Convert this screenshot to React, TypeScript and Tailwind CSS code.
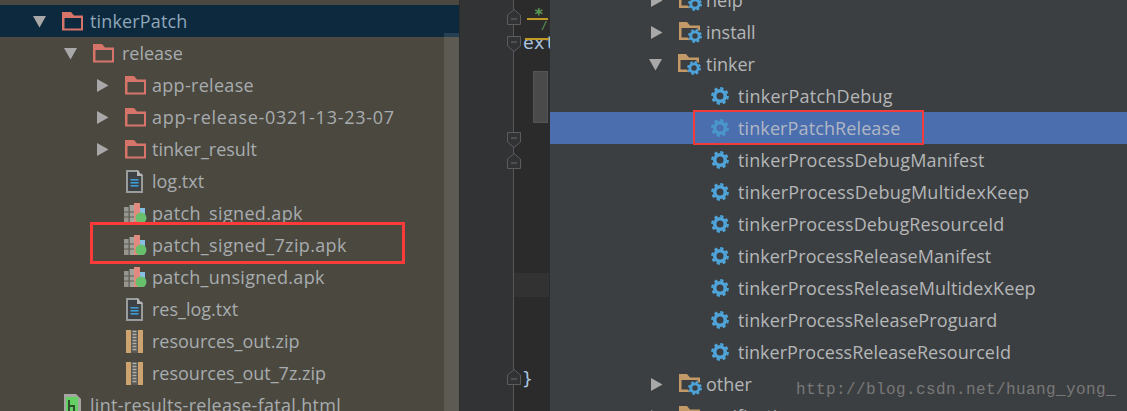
import React from "react";

const font = { fontFamily: '"Open Sans", "Noto Sans", sans-serif' };

function Tri({ open }: { open?: boolean }) {
  return (
    <svg width="13" height="13" viewBox="0 0 13 13" className="shrink-0">
      {open ? <polygon points="0,1 13,1 6.5,12.5" fill="#a8a8a8" /> : <polygon points="1,0 12.5,6.5 1,13" fill="#a8a8a8" />}
    </svg>
  );
}

function RedFolder() {
  return (
    <svg width="22" height="19" viewBox="0 0 22 19" className="shrink-0">
      <path d="M0 0H9L12 3.5H21V18.5H0Z" fill="#d7746a" />
      <rect x="2.5" y="6" width="16.5" height="10.5" fill="#4b4840" />
    </svg>
  );
}

function SelFolder() {
  return (
    <svg width="22" height="19" viewBox="0 0 22 19" className="shrink-0">
      <path d="M0 0H9L12 3.5H21V18.5H0Z" fill="#d7746a" />
      <rect x="2.5" y="6" width="16.5" height="10.5" fill="#0d293e" />
    </svg>
  );
}

function Gear({ size = 18, dim }: { size?: number; dim?: boolean }) {
  const c = dim ? "#4a95cc" : "#4ea3d8";
  return (
    <svg width={size} height={size} viewBox="0 0 18 18" className="shrink-0">
      <circle cx="9" cy="9" r="5.3" fill="none" stroke={c} strokeWidth="3.6" />
      <circle cx="9" cy="9" r="7.6" fill="none" stroke={c} strokeWidth="2.6" strokeDasharray="3.2 2.77" />
    </svg>
  );
}

function GearFolder() {
  return (
    <span className="relative block w-[23px] h-[21px] shrink-0">
      <svg width="21" height="18" viewBox="0 0 21 18" className="block">
        <path d="M0 0H8L11 3.5H21V18H0Z" fill="#c39a67" />
        <rect x="2.5" y="6" width="16" height="9.5" fill="#3c3f41" />
      </svg>
      <span className="absolute left-[9px] top-[7px] w-[14px] h-[14px] rounded-full bg-[#3c3f41] flex items-center justify-center">
        <Gear size={14} />
      </span>
    </span>
  );
}

function TxtIcon() {
  return (
    <svg width="17" height="23" viewBox="0 0 17 23" className="shrink-0">
      <path d="M0 0H12L17 5V23H0Z" fill="#9a9c9c" />
      <rect x="2" y="2" width="13" height="19" fill="#3d4144" />
      <path d="M11 0L17 6H11Z" fill="#b5b5b5" />
      <rect x="4.5" y="9" width="8" height="1.6" fill="#3f9dd6" />
      <rect x="4.5" y="12" width="8" height="1.6" fill="#3f9dd6" />
      <rect x="4.5" y="15" width="8" height="1.6" fill="#3f9dd6" />
    </svg>
  );
}

function ApkIcon() {
  return (
    <svg width="23" height="20" viewBox="0 0 23 20" className="shrink-0">
      <rect x="0" y="4" width="5" height="16" fill="#96968f" />
      <rect x="5.5" y="2" width="4.5" height="18" fill="#a3a39c" />
      <path d="M0 9H10M0 14H10M5 4V20" stroke="#5f5e58" strokeWidth="1" />
      <rect x="10" y="0" width="6" height="20" fill="#e08a80" />
      <rect x="16" y="5" width="5" height="8" fill="#86bfe2" />
      <circle cx="17" cy="15" r="5.5" fill="#68c06c" />
    </svg>
  );
}

function ZipIcon() {
  return (
    <svg width="17" height="23" viewBox="0 0 17 23" className="shrink-0">
      <rect x="0" y="0" width="17" height="23" fill="#cda46f" />
      <rect x="5" y="0" width="7" height="23" fill="#5a5852" />
      <path d="M6.5 1.5H10.5M6.5 4.5H10.5M6.5 7.5H10.5M6.5 10.5H10.5M6.5 13.5H10.5M6.5 16.5H10.5M6.5 19.5H10.5" stroke="#b0b0ac" strokeWidth="1.4" />
    </svg>
  );
}

function HtmlIcon() {
  return (
    <svg width="17" height="23" viewBox="0 0 17 23" className="shrink-0">
      <path d="M0 0H12L17 5V23H0Z" fill="#a5a5a2" />
      <rect x="2" y="3" width="12" height="20" fill="#63d063" />
      <path d="M5 6V19M5 12H10V19" stroke="#2f4f2f" strokeWidth="2" fill="none" />
    </svg>
  );
}

function LRow({ indent, tri, icon, text, gap, selected, track = "" }: { indent: number; tri?: "open" | "closed"; icon: React.ReactNode; text: string; gap: number; selected?: boolean; track?: string }) {
  return (
    <div className={`h-[32px] flex items-center shrink-0 ${selected ? "bg-[#0d293e]" : ""}`} style={{ paddingLeft: indent }}>
      <span className="w-[29px] shrink-0 flex">{tri ? <Tri open={tri === "open"} /> : null}</span>
      <span className="shrink-0 flex items-center" style={{ width: gap }}>{icon}</span>
      <span className={`text-[18px] leading-[32px] whitespace-nowrap ${track} ${selected ? "text-[#8fa6b8]" : "text-[#a7acae]"}`}>{text}</span>
    </div>
  );
}

function RRow({ indent, tri, text, selected, folder, track = "", iconW = 27 }: { indent: number; tri?: "open" | "closed"; text: string; selected?: boolean; folder?: boolean; track?: string; iconW?: number }) {
  return (
    <div className={`h-[32px] flex items-center shrink-0 ${selected ? "bg-[#4b6eaf]" : ""}`} style={{ paddingLeft: indent }}>
      {folder ? (
        <>
          <span className="w-[29px] shrink-0 flex"><Tri open={tri === "open"} /></span>
          <span className="shrink-0 flex" style={{ width: iconW }}><GearFolder /></span>
        </>
      ) : (
        <span className="w-[27px] shrink-0 flex"><Gear dim={selected} /></span>
      )}
      <span className={`text-[18px] leading-[32px] whitespace-nowrap ${track} ${selected ? "text-[#b0b7c4]" : "text-[#b4b6b8]"}`}>{text}</span>
    </div>
  );
}

function Fold({ y, up }: { y: number; up?: boolean }) {
  return (
    <svg width="14" height="16" viewBox="0 0 14 16" className="absolute left-[47px]" style={{ top: y }}>
      {up ? (
        <path d="M.5 15.5H13.5V6L7 .5L.5 6Z" fill="#313335" stroke="#5a5c5e" />
      ) : (
        <path d="M.5 .5H13.5V10L7 15.5L.5 10Z" fill="#313335" stroke="#5a5c5e" />
      )}
      <path d={up ? "M4 10H10" : "M4 6H10"} stroke="#6a6c6e" />
    </svg>
  );
}

const tasks = [
  { t: "tinkerProcessDebugManifest", c: "tracking-[0.19px]" },
  { t: "tinkerProcessDebugMultidexKeep", c: "tracking-[0.23px]" },
  { t: "tinkerProcessDebugResourceId", c: "tracking-[0.14px]" },
  { t: "tinkerProcessReleaseManifest", c: "tracking-[0.07px]" },
  { t: "tinkerProcessReleaseMultidexKeep", c: "tracking-[0.12px]" },
  { t: "tinkerProcessReleaseProguard", c: "tracking-[0.1px]" },
  { t: "tinkerProcessReleaseResourceId", c: "tracking-[0.03px]" },
];

export default function App() {
  return (
    <div className="w-[1127px] h-[411px] flex overflow-hidden relative" style={font}>
      {/* Project tree */}
      <div className="w-[459px] h-full bg-[#4b4840] flex flex-col pt-[5px] overflow-hidden relative shrink-0">
        <LRow indent={33} tri="open" icon={<SelFolder />} gap={28} text="tinkerPatch" selected track="tracking-[0.15px]" />
        <LRow indent={64} tri="open" icon={<RedFolder />} gap={29} text="release" />
        <LRow indent={96} tri="closed" icon={<RedFolder />} gap={27} text="app-release" track="tracking-[0.3px]" />
        <LRow indent={96} tri="closed" icon={<RedFolder />} gap={27} text="app-release-0321-13-23-07" track="tracking-[0.72px]" />
        <LRow indent={96} tri="closed" icon={<RedFolder />} gap={27} text="tinker_result" />
        <LRow indent={97} icon={<TxtIcon />} gap={26} text="log.txt" />
        <LRow indent={95} icon={<ApkIcon />} gap={28} text="patch_signed.apk" track="tracking-[0.35px]" />
        <LRow indent={95} icon={<ApkIcon />} gap={28} text="patch_signed_7zip.apk" track="tracking-[0.35px]" />
        <LRow indent={95} icon={<ApkIcon />} gap={28} text="patch_unsigned.apk" track="tracking-[0.3px]" />
        <LRow indent={97} icon={<TxtIcon />} gap={26} text="res_log.txt" />
        <LRow indent={97} icon={<ZipIcon />} gap={26} text="resources_out.zip" />
        <LRow indent={97} icon={<ZipIcon />} gap={26} text="resources_out_7z.zip" />
        <LRow indent={35} icon={<HtmlIcon />} gap={26} text="lint-results-release-fatal.html" track="tracking-[0.3px]" />
        <div className="absolute left-[444px] top-[33px] w-[15px] h-[378px] bg-white/10" />
        <div className="absolute left-[90px] top-[222px] w-[315px] h-[42px] border-[3px] border-[#fb3a3a]" />
      </div>

      {/* Editor */}
      <div className="w-[91px] h-full flex shrink-0 relative border-l border-[#2b2b2b]">
        <div className="w-[54px] h-full bg-[#313335] shrink-0 border-r border-[#55575a]" />
        <div className="flex-1 h-full bg-[#2b2b2b] relative overflow-hidden" style={{ fontFamily: '"DejaVu Sans Mono", monospace' }}>
          <div className="absolute left-[20px] top-[6px] text-[#5d9c55] text-[16px] leading-[18px] font-bold">*</div>
          <div className="absolute left-[13px] top-[18px] w-[21px] h-[2px] bg-[#c09a24]" />
          <div className="absolute left-[27px] top-[20px] text-[#5d9c55] text-[11px] leading-[12px]">/</div>
          <div className="absolute left-[9px] top-[33px] text-[#a9c4e0] text-[18px] leading-[20px] whitespace-nowrap">ext</div>
          <div className="absolute left-[11px] top-[38px] w-[24px] h-[2px] bg-[#c09a24]" />
          <div className="absolute left-[19px] top-[71px] w-[15px] h-[52px] bg-[#4a4a4a] border border-[#555555]" />
          <div className="absolute left-0 top-[273px] w-[35px] h-[24px] bg-[#323232]" />
          <div className="absolute left-[8px] top-[369px] text-[#a9c4e0] text-[18px] leading-[20px]">{"}"}</div>
        </div>
        <div className="absolute left-[53px] top-0 w-px h-full bg-[#55575a]" />
        <Fold y={9} up />
        <Fold y={36} />
        <Fold y={132} />
        <Fold y={153} up />
        <Fold y={369} up />
      </div>

      {/* Gradle panel */}
      <div className="flex-1 h-full bg-[#3c3f41] flex flex-col overflow-hidden relative">
        <div className="flex flex-col mt-[-16px]">
          <RRow indent={100} folder tri="closed" text="help" />
          <RRow indent={100} folder tri="closed" text="install" />
          <RRow indent={99} folder tri="open" text="tinker" iconW={28} />
          <RRow indent={161} text="tinkerPatchDebug" track="tracking-[0.25px]" />
          <RRow indent={161} text="tinkerPatchRelease" selected track="tracking-[0.11px]" />
          {tasks.map(({ t, c }) => (
            <RRow key={t} indent={161} text={t} track={c} />
          ))}
          <RRow indent={100} folder tri="closed" text="other" />
          <RRow indent={100} folder tri="closed" text="verification" />
        </div>
        <div className="absolute left-[143px] top-[110px] w-[231px] h-[35px] border-2 border-[#f23b3b]" />
        <div className="absolute left-[246px] top-[380px] text-[16px] leading-[20px] tracking-[0.4px] text-[#787878] whitespace-nowrap" style={{ fontFamily: '"Liberation Mono", monospace' }}>
          http://blog.csdn.net/huang_yong_
        </div>
      </div>
    </div>
  );
}
